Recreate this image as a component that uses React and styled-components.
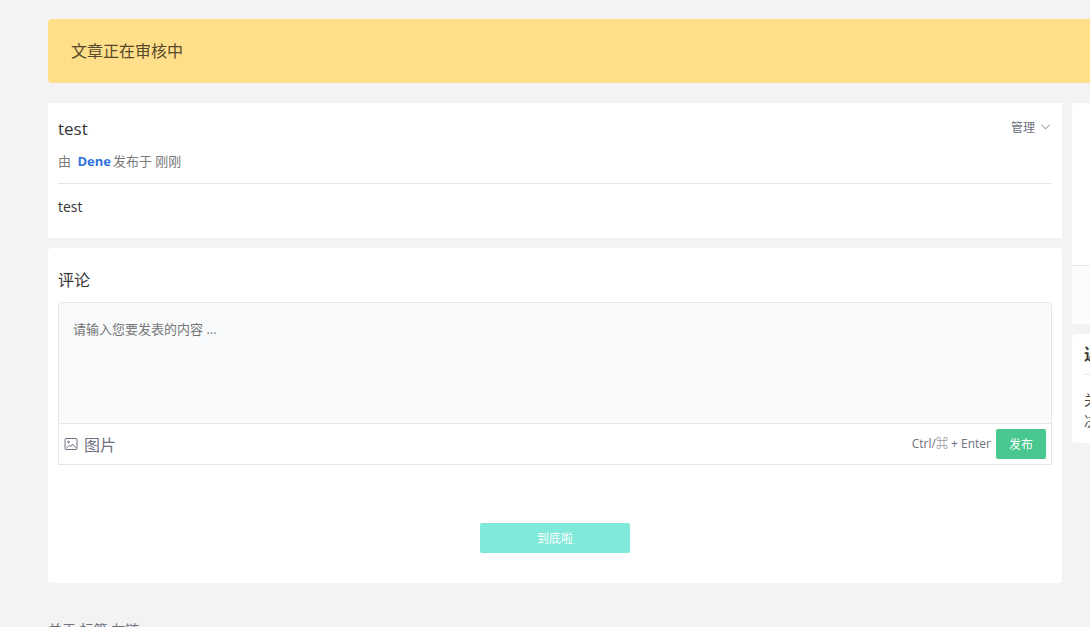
import styled, { createGlobalStyle } from 'styled-components';

export default function App() {
    return (
        <>
            <GlobalStyle />
            <Page>
                <Notice role='status'>文章正在审核中</Notice>
                <Columns>
                    <Main>
                        <Article>
                            <ArticleHeader>
                                <h1>test</h1>
                                <ManageButton type='button'>
                                    管理
                                    <ChevronIcon />
                                </ManageButton>
                            </ArticleHeader>
                            <Meta>
                                由 <a href='#dene'>Dene</a>发布于 刚刚
                            </Meta>
                            <Content>test</Content>
                        </Article>
                        <Comments>
                            <h2 id='comments-title'>评论</h2>
                            <Editor>
                                <textarea
                                    aria-labelledby='comments-title'
                                    placeholder='请输入您要发表的内容 ...'
                                />
                                <Toolbar>
                                    <ImageButton type='button'>
                                        <ImageIcon />
                                        图片
                                    </ImageButton>
                                    <Submit>
                                        <span>Ctrl/⌘ + Enter</span>
                                        <PublishButton type='submit'>发布</PublishButton>
                                    </Submit>
                                </Toolbar>
                            </Editor>
                            <MoreButton type='button' disabled>到底啦</MoreButton>
                        </Comments>
                    </Main>
                    <Sidebar>
                        <Profile>
                            <div className='body' />
                            <div className='footer' />
                        </Profile>
                        <Widget>
                            <h3>近期评论</h3>
                            <p>关于</p>
                            <p>决定</p>
                        </Widget>
                    </Sidebar>
                </Columns>
                <Footer>
                    <a href='#about'>关于</a> <a href='#tags'>标签</a> <a href='#links'>友链</a>
                </Footer>
            </Page>
        </>
    )
}

function ChevronIcon() {
    return (
        <svg width='9' height='6' viewBox='0 0 9 6' fill='none' stroke='currentColor' strokeWidth='0.9' aria-hidden='true'>
            <path d='M0.4 0.8L4.5 4.9L8.6 0.8' />
        </svg>
    )
}

function ImageIcon() {
    return (
        <svg width='14' height='14' viewBox='0 0 14 14' fill='none' stroke='currentColor' aria-hidden='true'>
            <rect x='1' y='1.5' width='12' height='11' rx='1' />
            <circle cx='4.5' cy='5' r='0.9' />
            <path d='M2.4 11L5.2 8.4L6.6 9.6L8.6 7L11.8 10.8' />
        </svg>
    )
}

const GlobalStyle = createGlobalStyle`
    * {
        box-sizing: border-box;
        margin: 0;
        padding: 0;
    }

    body {
        height: 100vh;
        overflow: hidden;
        background-color: #F3F3F3;
        color: #363636;
        font-family: 'Open Sans', 'Noto Sans CJK SC', sans-serif;
        font-size: 16px;
        line-height: 24px;
    }

    button, textarea {
        font-family: inherit;
        border: none;
    }

    a {
        color: inherit;
        text-decoration: none;
    }
`

/* the sidebar runs past the right edge of the window */
const Page = styled.div`
    padding: 19px 0 0 48px;
    margin-right: -320px;
`

const Notice = styled.div`
    padding: 20px 23px;
    margin-bottom: 20px;
    border-radius: 4px;
    background-color: #FFDF8A;
    color: #55492B;
`

const Columns = styled.div`
    display: grid;
    grid-template-columns: minmax(0, 1fr) 338px;
    align-items: start;
    gap: 10px;
`

const Main = styled.main`
    display: grid;
    gap: 10px;
`

const Sidebar = styled.aside`
    display: grid;
    gap: 10px;
`

const Article = styled.article`
    padding: 12px 10px 19px;
    background-color: #FFFFFF;
`

const ArticleHeader = styled.header`
    display: flex;
    justify-content: space-between;

    h1 {
        font-weight: 400;
        font-size: 17px;
        line-height: 28px;
    }
`

const ManageButton = styled.button`
    display: flex;
    align-items: center;
    gap: 6px;
    height: 24px;
    padding-right: 2px;
    background: none;
    color: #6F7280;
    font-size: 12px;
`

const Meta = styled.p`
    padding: 6px 0 10px;
    border-bottom: 1px solid #E6E6E6;
    color: #7A7A7A;
    font-size: 13px;

    a {
        margin: 0 2px 0 3px;
        color: #3273DC;
        font-weight: 700;
    }
`

const Content = styled.p`
    padding-top: 11px;
    font-size: 14px;
`

const Comments = styled.section`
    padding: 20px 10px 30px;
    border-radius: 4px;
    background-color: #FFFFFF;

    h2 {
        margin-bottom: 10px;
        font-weight: 400;
        font-size: 16px;
    }
`

const Editor = styled.form`
    border: 1px solid #E6E6E6;
    border-radius: 4px 4px 0 0;

    textarea {
        display: block;
        width: 100%;
        height: 120px;
        padding: 16px 14px;
        resize: none;
        outline: none;
        border-radius: 4px 4px 0 0;
        background-color: #F9FAFC;
        font-size: 13px;
    }

    textarea::placeholder {
        color: #757575;
    }
`

const Toolbar = styled.div`
    display: flex;
    align-items: center;
    justify-content: space-between;
    padding: 5px;
    border-top: 1px solid #E6E6E6;
    color: #6F7280;
`

const ImageButton = styled.button`
    display: flex;
    align-items: center;
    gap: 6px;
    background: none;
    color: inherit;
    font-size: 16px;
`

const Submit = styled.div`
    display: flex;
    align-items: center;
    gap: 5px;
    font-size: 12px;
`

const PublishButton = styled.button`
    width: 50px;
    height: 30px;
    border-radius: 2px;
    background-color: #48C78E;
    color: #FFFFFF;
    font-size: 12px;
`

const MoreButton = styled.button`
    display: block;
    width: 150px;
    height: 30px;
    margin: 58px auto 0;
    border-radius: 2px;
    background-color: #80E9D9;
    color: #FFFFFF;
    font-size: 12px;
`

const Profile = styled.section`
    overflow: hidden;
    border-radius: 4px;
    background-color: #FFFFFF;

    .body {
        height: 162px;
    }

    .footer {
        height: 59px;
        border-top: 1px solid #E6E6E6;
        background-color: #FCFCFC;
    }
`

const Widget = styled.section`
    padding: 8px 12px 12px;
    border-radius: 4px;
    background-color: #FFFFFF;

    h3 {
        padding-bottom: 8px;
        margin-bottom: 14px;
        border-bottom: 1px solid #E6E6E6;
        font-weight: 700;
        font-size: 16px;
    }

    p {
        color: #4A4A4A;
        font-size: 14px;
        line-height: 21px;
    }
`

const Footer = styled.footer`
    padding-top: 35px;
    color: #6F7280;
    font-size: 14px;
`
